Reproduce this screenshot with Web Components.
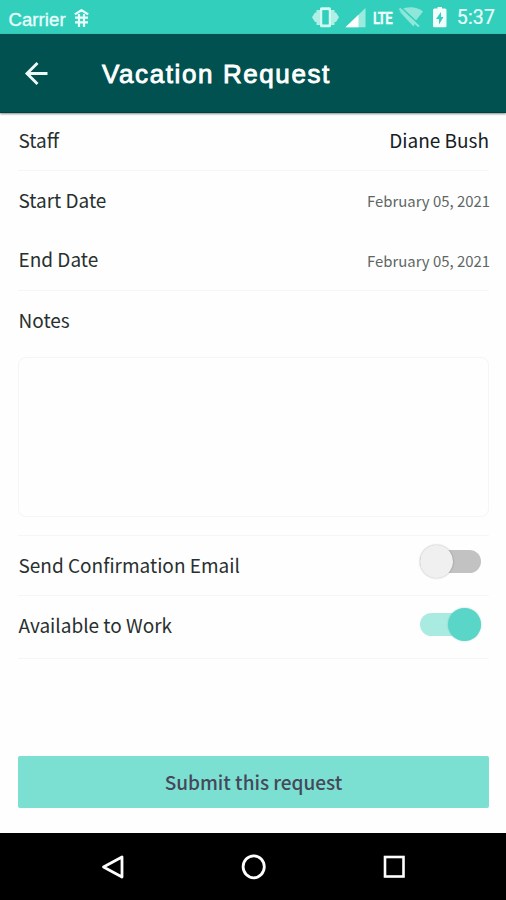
<!DOCTYPE html>
<html lang="en">
<head>
<meta charset="utf-8">
<title>Vacation Request</title>
<style>
html,body{margin:0;height:100%}
body{background:#fefefe;overflow:hidden}
</style>
</head>
<body>
<vacation-app></vacation-app>
<script>
const define = (name, html) => {
  const t = document.createElement('template');
  t.innerHTML = html;
  customElements.define(name, class extends HTMLElement {
    constructor() {
      super();
      this.attachShadow({ mode: 'open' }).append(t.content.cloneNode(true));
    }
  });
};

define('status-bar', `
<style>
:host{display:flex;box-sizing:border-box;height:34px;background:#33cfbd;color:#e9fffb;justify-content:space-between;font-family:"Liberation Sans",Arial,sans-serif}
.left{display:flex;padding-left:8.5px;gap:8px}
.carrier{font-size:18.5px;line-height:39px;letter-spacing:.1px;-webkit-text-stroke:.35px #e9fffb}
.left svg{margin-top:9px}
.right{display:flex;padding-right:11px}
.time{font:400 19.5px/35px Roboto,sans-serif;letter-spacing:.15px;margin-left:10px;-webkit-text-stroke:.2px #e9fffb}
.lte{display:block;width:21px;margin:0 -2px 0 1px;font:600 17px/36px Roboto,sans-serif;color:#f2fffd;letter-spacing:-1px;-webkit-text-stroke:.3px #f2fffd}
.lte span{display:inline-block;transform:scaleX(.78);transform-origin:0 50%}
</style>
<div class="left"><span class="carrier">Carrier</span>
<svg width="15" height="19" viewBox="0 0 15 19" fill="none" stroke="#e9fffb" stroke-width="2.200"><path d="M.8 5.400 7.500 1.200l6.700 4.200M1 8.700h13M1 13.400h13M5 5V18M10 5V18"/></svg></div>
<div class="right">
<svg width="61" height="34" viewBox="0 0 61 34">
<path d="M1 17.300 4 12.500H5.500V10H9.500V25H5.500V22H4ZM28 17.300 25 12.500H23.500V10H19.500V25H23.500V22H25Z" fill="#b0efe5"/>
<path d="M10.500 7.300h8q1.500 0 1.500 1.500v17q0 1.500-1.500 1.500h-8Q9 27.300 9 25.800v-17Q9 7.300 10.500 7.300ZM11.500 10.300v14h6v-14Z" fill="#d2faf3" fill-rule="evenodd"/>
<path d="M11.500 10.300h6v14h-6Z" fill="#33cfbd"/>
<path d="M34.500 27.300 54.500 8V27.300Z" fill="#9aebdf"/><path d="M34.500 27.300 47.500 14.800V27.300Z" fill="#fff"/>
</svg>
<span class="lte"><span>LTE</span></span>
<svg width="55" height="34" viewBox="83 0 55 34">
<path d="M92 9.300Q104 4.500 114 11.500L106.500 21Z" fill="#8fe7da"/>
<path d="M90.500 10.800 91 12 104.500 26.500 107 21Z" fill="#8fe7da"/>
<path d="M90.500 8.500 110 26.500" stroke="#8fe7da" stroke-width="2.200"/><path d="M92.500 7.800 110.500 24.500" stroke="#33cfbd" stroke-width="1.500"/>
<path d="M125.500 8.500H128.500V7H133V8.500H136Q137.500 8.500 137.500 10V26Q137.500 27.300 136 27.300H125.500Q124 27.300 124 26V10Q124 8.500 125.500 8.500Z" fill="#f2fffd"/>
<path d="M132 12 127 19H130V24.500L134.500 17H132Z" fill="#33cfbd"/>
</svg>
<span class="time">5:37</span></div>`);

define('app-header', `
<style>
:host{display:flex;box-sizing:border-box;height:79px;padding-left:24px;background:#005150;color:#fff;align-items:center;gap:54px;border-bottom:1px solid #00403f;box-shadow:0 1px 2px #0007;z-index:1}
h1{margin:0;padding-top:2px;font:400 26px/76px "Liberation Sans",Arial,sans-serif;letter-spacing:1.6px;-webkit-text-stroke:.9px #fff}
</style>
<svg width="24" height="26" viewBox="0 0 24 26" fill="none" stroke="#eef8f7" stroke-width="2.900"><path d="M23.500 13.500H3.500M13.500 3 3 13.500 13.500 24"/></svg>
<h1><slot></slot></h1>`);

define('form-row', `
<style>
:host{display:flex;box-sizing:border-box;height:60px;margin:0 17px 0 18px;padding-bottom:var(--lift,2px);justify-content:space-between;align-items:center;border-bottom:1px solid var(--line,#f5f6f6);color:#28302f}
.label{padding-left:.5px}
</style>
<span class="label"><slot></slot></span><slot name="value"></slot>`);

define('toggle-switch', `
<style>
:host{display:flex;align-items:center;width:61px;height:34px;margin:0 8px var(--rise,6px) 0}
.track{flex:1;height:23px;border-radius:12px;background:#c2c2c2;display:flex;align-items:center}
.thumb{width:33px;height:33px;flex:none;border-radius:50%;background:#f0f0f0;box-shadow:0 0 2px #0005}
:host([on]) .track{background:#a9ebe1;justify-content:flex-end}
:host([on]) .thumb{background:#59d6c7;box-shadow:0 0 2px #2b9b8f66}
</style>
<div class="track"><div class="thumb"></div></div>`);

define('notes-box', `
<style>
:host{display:block;box-sizing:border-box;height:160px;margin:0 17px 0 18px;border:1px solid #f4f5f5;border-radius:8px;background:#fefefe}
</style>`);

define('submit-button', `
<style>
:host{display:block;margin:0 17px 0 18px}
button{display:block;width:100%;height:52px;padding:0;border:0;border-radius:2px;background:#7be0d1;color:#45485a;font:500 19px/52px "Noto Sans CJK SC",sans-serif}
</style>
<button><slot></slot></button>`);

define('nav-bar', `
<style>
:host{display:flex;height:67px;background:#000;justify-content:space-between;align-items:center;padding:0 99px 0 100px}
</style>
<svg width="26" height="26" viewBox="0 0 26 26" fill="none" stroke="#fff" stroke-width="2.800" stroke-linejoin="round"><path d="M22 3V23L3.500 13Z"/></svg>
<svg width="26" height="26" viewBox="0 0 26 26" fill="none" stroke="#fff" stroke-width="2.800"><ellipse cx="12.700" cy="12.800" rx="10.600" ry="11"/></svg>
<svg width="26" height="26" viewBox="0 0 26 26" fill="none" stroke="#fff" stroke-width="2.600"><rect x="4" y="3" width="18.500" height="19.500"/></svg>`);

define('vacation-app', `
<style>
:host{display:flex;flex-direction:column;width:506px;height:900px;background:#fefefe;font:400 19px/28px "Noto Sans CJK SC",sans-serif}
.staff{height:58px;--lift:3px}
.start{--line:transparent;--lift:3px;height:61px}
.end{height:59px;--lift:4px}
.notes{--line:transparent;height:61px;margin-bottom:5px;--lift:2px}
.rule{height:1px;background:#f5f6f6;margin:18px 17px 0 18px}
.avail{height:63px;--lift:4px;--rise:1px}
.name{color:#17201f}
.date{font-size:14.9px;color:#606665;margin:3px -1px 0 0}
.fill{flex:1}
nav-bar{margin-top:25px}
</style>
<status-bar></status-bar>
<app-header>Vacation Request</app-header>
<form-row class="staff">Staff<span class="name" slot="value">Diane Bush</span></form-row>
<form-row class="start">Start Date<span class="date" slot="value">February 05, 2021</span></form-row>
<form-row class="end">End Date<span class="date" slot="value">February 05, 2021</span></form-row>
<form-row class="notes">Notes</form-row>
<notes-box></notes-box>
<div class="rule"></div>
<form-row>Send Confirmation Email<toggle-switch slot="value"></toggle-switch></form-row>
<form-row class="avail">Available to Work<toggle-switch on slot="value"></toggle-switch></form-row>
<div class="fill"></div>
<submit-button>Submit this request</submit-button>
<nav-bar></nav-bar>`);
</script>
</body>
</html>
